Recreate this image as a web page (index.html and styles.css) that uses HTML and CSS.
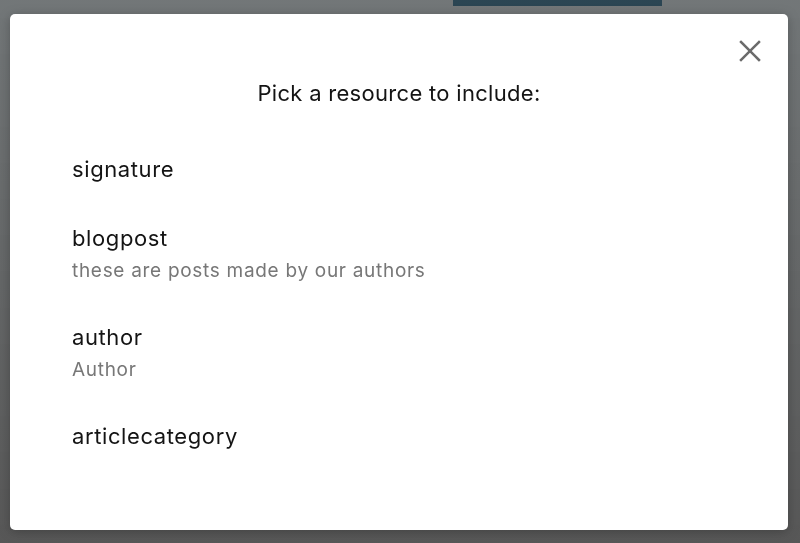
FILE: index.html
```html
<!DOCTYPE html>
<html lang="en">
<head>
    <meta charset="UTF-8">
    <meta name="viewport" content="width=device-width, initial-scale=1.0">
    <title>Include resource</title>
    <link rel="stylesheet" href="styles.css">
</head>
<body>
    <div class="page">
        <div class="topbar">
            <button class="publish-btn"></button>
        </div>
    </div>
    <div class="overlay">
        <div class="modal">
            <button class="close-btn" aria-label="Close">
                <svg width="24" height="24" viewBox="0 0 24 24">
                    <path d="M3 3 L21 21 M21 3 L3 21" stroke="#6b6b6b" stroke-width="2.5" stroke-linecap="square" fill="none"/>
                </svg>
            </button>
            <h2 class="modal-title">Pick a resource to include:</h2>
            <ul class="resource-list">
                <li class="resource">
                    <div class="resource-name">signature</div>
                </li>
                <li class="resource">
                    <div class="resource-name">blogpost</div>
                    <div class="resource-desc">these are posts made by our authors</div>
                </li>
                <li class="resource">
                    <div class="resource-name">author</div>
                    <div class="resource-desc">Author</div>
                </li>
                <li class="resource">
                    <div class="resource-name">articlecategory</div>
                </li>
            </ul>
        </div>
    </div>
</body>
</html>
```

FILE: styles.css
```css
body {
    margin: 0;
    padding: 0;
    font-family: Inter, "Noto Sans", sans-serif;
    background-color: #fff;
    height: 543px;
    overflow: hidden;
}
.page {
    height: 100%;
}
.topbar {
    display: flex;
    padding-left: 453px;
}
.publish-btn {
    width: 209px;
    height: 6px;
    border: none;
    padding: 0;
    background-color: #004f7a;
}
.overlay {
    position: fixed;
    inset: 0;
    background: linear-gradient(to bottom, rgba(60, 66, 68, 0.72), rgba(40, 40, 40, 0.78));
    padding: 14px 12px 13px 10px;
}
.modal {
    position: relative;
    box-sizing: border-box;
    height: 100%;
    background-color: #fff;
    border-radius: 5px;
    box-shadow: 0 2px 12px rgba(0, 0, 0, 0.25);
    padding: 63px 62px 0 62px;
}
.close-btn {
    position: absolute;
    top: 25px;
    right: 26px;
    width: 24px;
    height: 24px;
    padding: 0;
    border: none;
    background: none;
    cursor: pointer;
}
.close-btn svg {
    display: block;
}
.modal-title {
    margin: 0 0 26px 0;
    text-align: center;
    font-size: 22px;
    font-weight: 400;
    letter-spacing: 0.3px;
    line-height: 32px;
    color: #141414;
}
.resource-list {
    list-style: none;
    margin: 0;
    padding: 0;
}
.resource {
    padding: 16px 0 17px 0;
    cursor: pointer;
}
.resource-name {
    font-size: 22px;
    letter-spacing: 0.6px;
    line-height: 36px;
    color: #141414;
}
.resource-desc {
    font-size: 19px;
    letter-spacing: 0.7px;
    line-height: 30px;
    color: #777;
}
```
